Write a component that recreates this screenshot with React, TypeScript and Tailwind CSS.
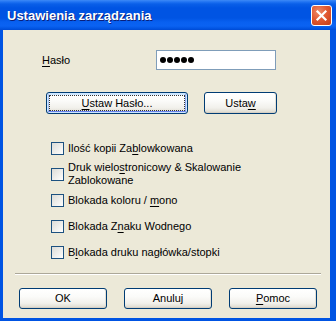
import React from "react";

const F = { fontFamily: '"Liberation Sans", Arial, sans-serif' };

function U({ children }: { children: React.ReactNode }) {
  return <span className="underline underline-offset-[2px] decoration-1">{children}</span>;
}

function XPButton({
  children,
  className = "",
  focused = false,
}: {
  children: React.ReactNode;
  className?: string;
  focused?: boolean;
}) {
  return (
    <div
      className={
        "relative flex items-center justify-center rounded-[3px] border border-[#003c74] text-[11px] text-black bg-[linear-gradient(180deg,#ffffff_0%,#fbfbf9_40%,#f1f0eb_75%,#e3e0d6_92%,#d6d0c5_100%)] " +
        (focused
          ? "shadow-[inset_0_0_0_1px_#cee7ff,inset_0_-2px_0_0_#6982ee,inset_2px_0_0_0_#a8c3f5,inset_-2px_0_0_0_#8fa9f0,inset_0_2px_0_0_#cee7ff] "
          : "shadow-[inset_0_-1px_0_0_#d6d0c5,inset_-1px_0_0_0_#e3e0d6] ") +
        className
      }
      style={F}
    >
      {focused && (
        <span className="absolute inset-[2px] border border-dotted border-[#333]" />
      )}
      <span className="relative leading-[13px]">{children}</span>
    </div>
  );
}

function Check({ children }: { children: React.ReactNode }) {
  return (
    <div className="flex h-[26px] items-center">
      <div className="w-[13px] h-[13px] shrink-0 border border-[#1c5180] bg-[linear-gradient(135deg,#dcdcd7_0%,#f4f4f2_70%,#ffffff_100%)]" />
      <div className="ml-[4px] text-[11px] leading-[13px] text-black" style={F}>
        {children}
      </div>
    </div>
  );
}

export default function App() {
  return (
    <div className="w-[336px] h-[321px] flex flex-col bg-[#0054e3] overflow-hidden">
      {/* title bar */}
      <div className="h-[30px] shrink-0 flex items-center bg-[linear-gradient(180deg,#3d8af7_0px,#1f72f2_2px,#0a5fe8_4px,#0054e3_8px,#0054e3_18px,#0860f0_22px,#0a62f2_26px,#0052df_29px,#0049d2_30px)]">
        <div
          className="pl-[7px] text-white font-bold text-[13px] leading-[15px] [text-shadow:1px_1px_0_#0a1f7a]"
          style={{ fontFamily: '"Liberation Sans", Arial, sans-serif' }}
        >
          Ustawienia zarządzania
        </div>
        <div className="ml-auto mr-[4px] mt-[1px] w-[21px] h-[21px] rounded-[3px] border border-white bg-[radial-gradient(circle_at_35%_30%,#ec8b6a_0%,#e25a33_45%,#c63c16_100%)] flex items-center justify-center">
          <svg width="13" height="13" viewBox="0 0 13 13">
            <path d="M2.5 2.5 L10.5 10.5 M10.5 2.5 L2.5 10.5" stroke="#fff" strokeWidth="2.2" strokeLinecap="square" />
          </svg>
        </div>
      </div>

      {/* client */}
      <div className="flex-1 ml-[3px] mr-[6px] mb-[3px] bg-[#ece9d8] flex flex-col">
        <div className="mt-[20px] flex items-center h-[20px]">
          <div className="pl-[39px] w-[153px] text-[11px] text-black" style={F}>
            <U>H</U>asło
          </div>
          <div className="w-[120px] h-[20px] bg-white border border-[#7f9db9] flex items-center pl-[3px] gap-[1px]">
            {[0, 1, 2, 3, 4].map((i) => (
              <span key={i} className="w-[6px] h-[6px] rounded-full bg-black" />
            ))}
          </div>
        </div>

        <div className="mt-[22px] flex pl-[43px] gap-[16px]">
          <XPButton focused className="w-[142px] h-[22px]">
            <U>U</U>staw Hasło...
          </XPButton>
          <XPButton className="w-[73px] h-[22px]">
            Usta<U>w</U>
          </XPButton>
        </div>

        <div className="mt-[21px] pl-[48px] flex flex-col">
          <Check>
            Ilość kopii Za<U>b</U>lowkowana
          </Check>
          <Check>
            Druk wielo<U>s</U>tronicowy &amp; Skalowanie
            <br />
            Zablokowane
          </Check>
          <Check>
            Blokada koloru / <U>m</U>ono
          </Check>
          <Check>
            Blokada Z<U>n</U>aku Wodnego
          </Check>
          <Check>
            B<U>l</U>okada druku nagłówka/stopki
          </Check>
        </div>

        <div className="mt-[8px] ml-[12px] mr-[9px] h-[2px] border-t border-[#aca899] bg-white" />

        <div className="mt-[13px] flex pl-[16px] gap-[17px]">
          <XPButton className="w-[88px] h-[21px]">OK</XPButton>
          <XPButton className="w-[88px] h-[21px]">Anuluj</XPButton>
          <XPButton className="w-[88px] h-[21px]">
            <U>P</U>omoc
          </XPButton>
        </div>
      </div>
    </div>
  );
}
